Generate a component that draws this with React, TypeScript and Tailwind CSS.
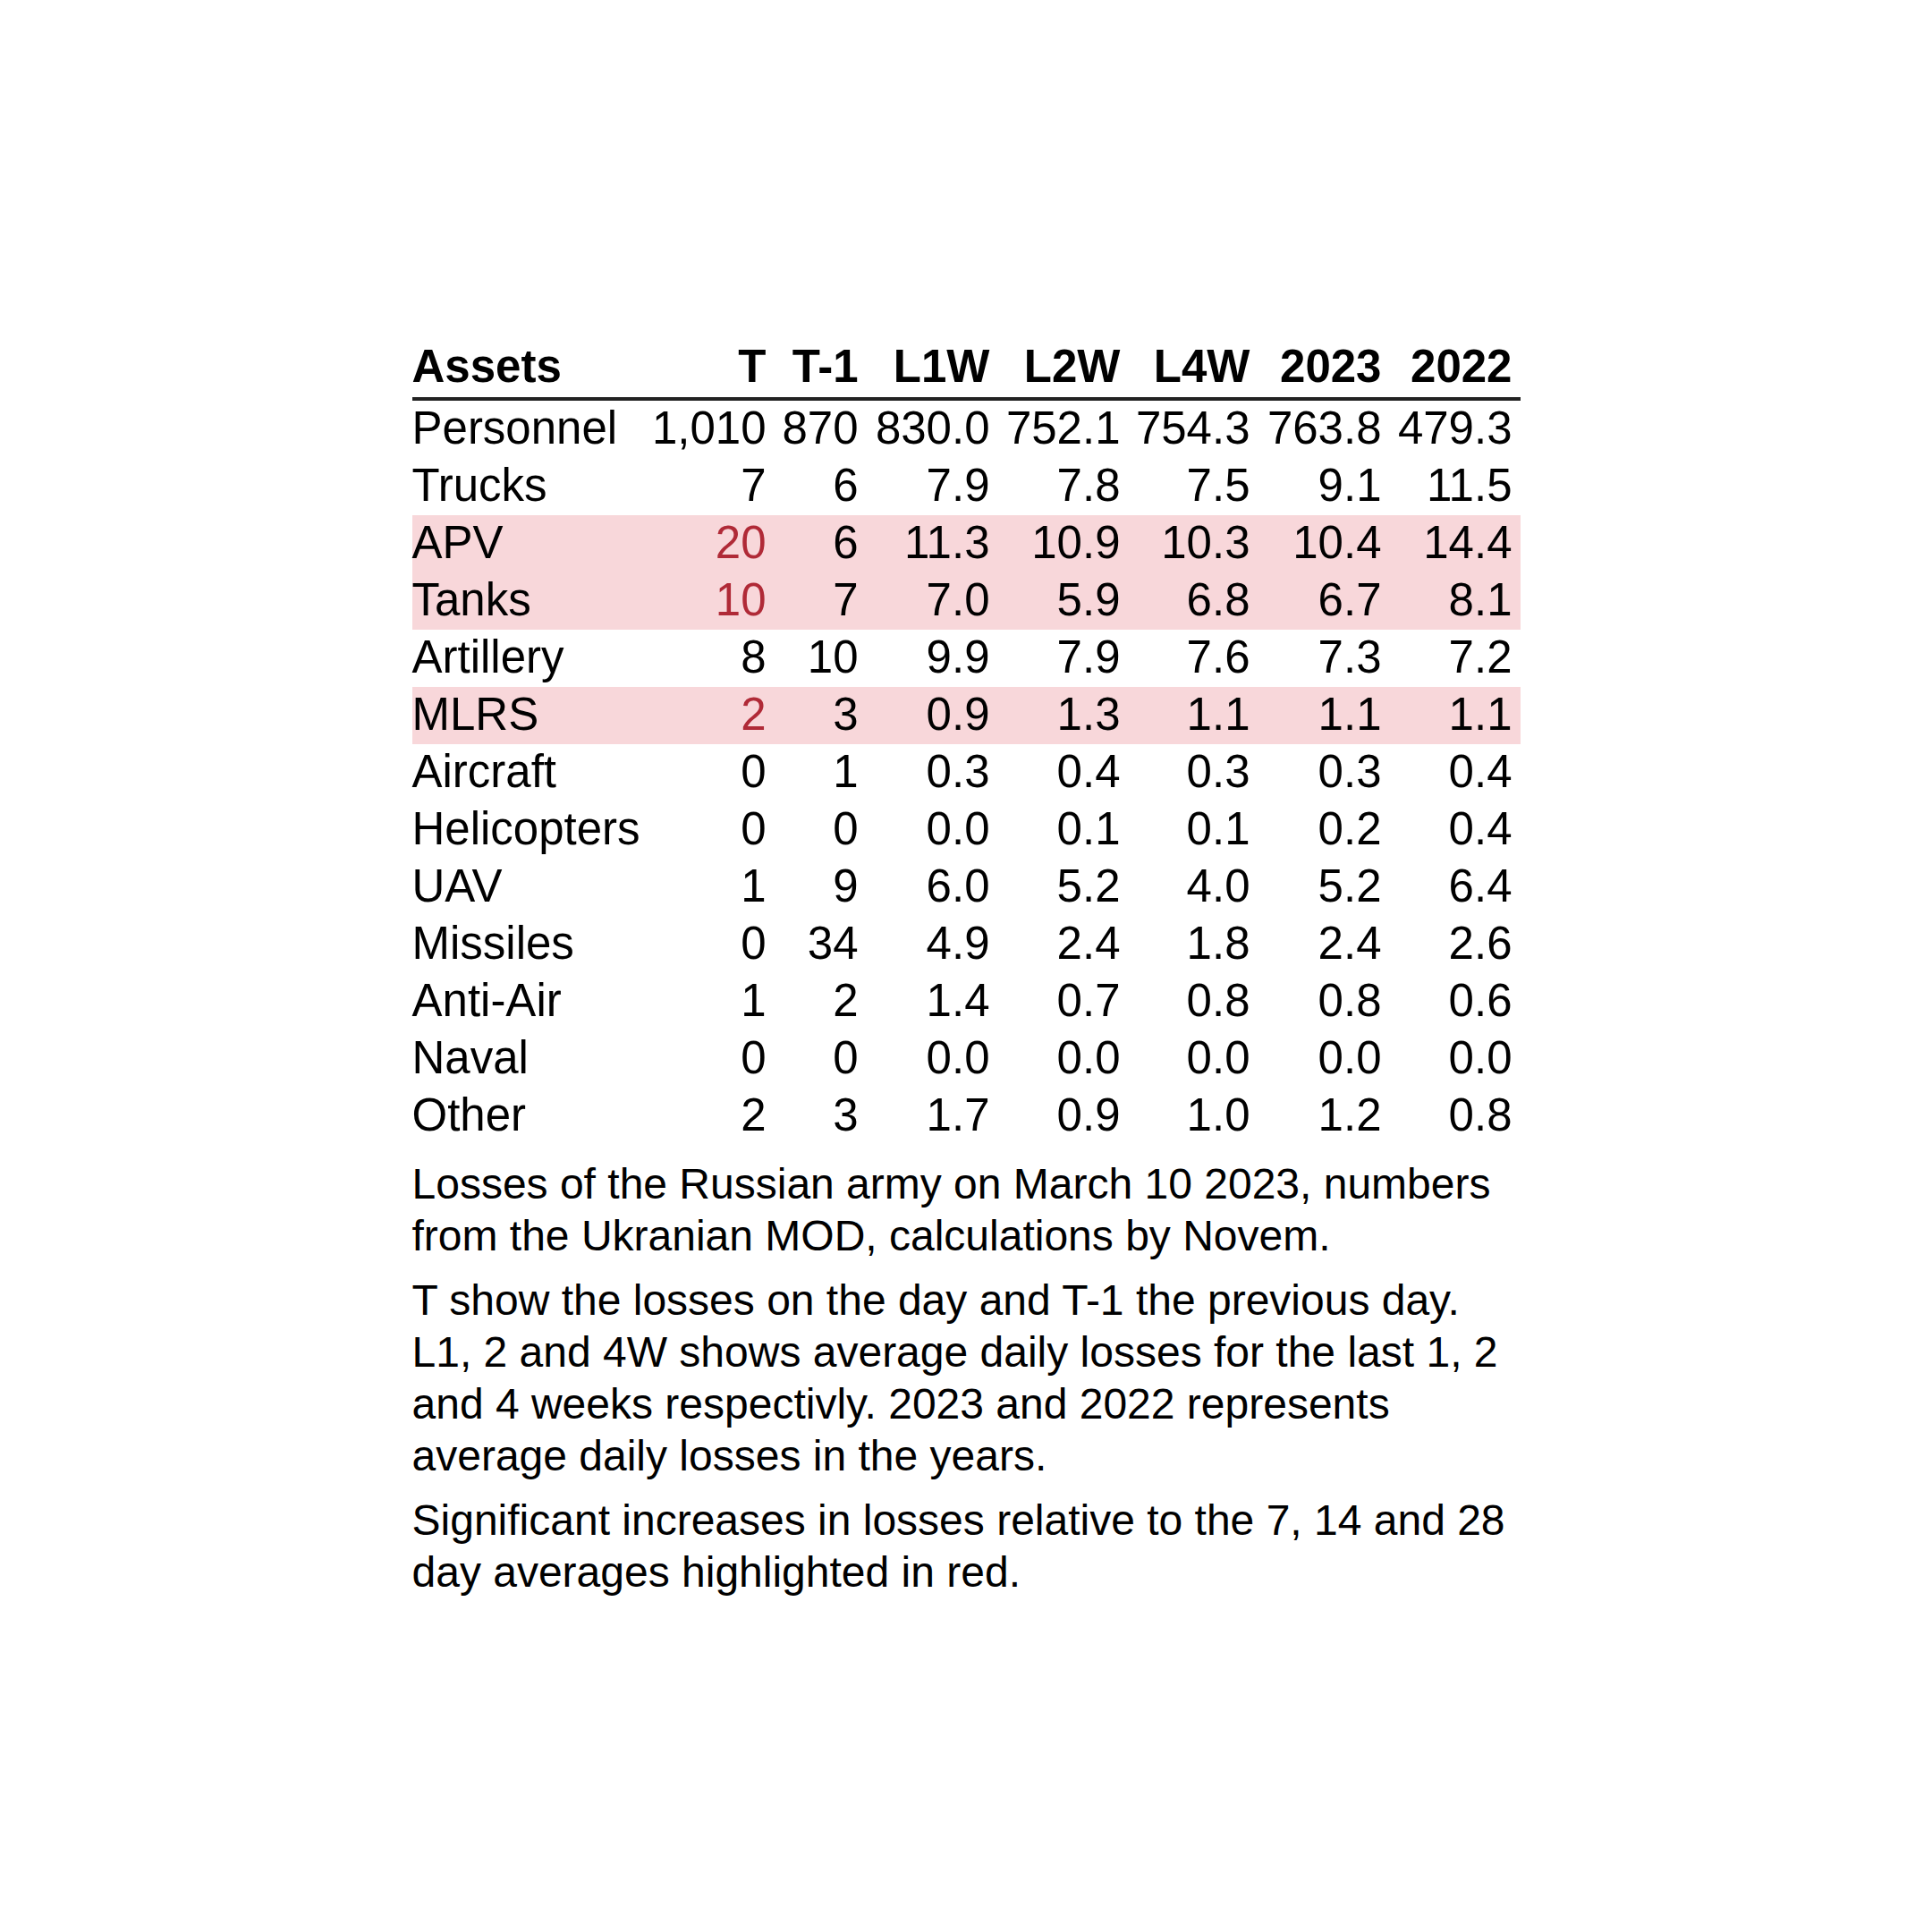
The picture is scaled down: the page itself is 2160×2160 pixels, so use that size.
import React from "react";

type Row = { name: string; vals: string[]; hl?: boolean };

const rows: Row[] = [
  { name: "Personnel", vals: ["1,010", "870", "830.0", "752.1", "754.3", "763.8", "479.3"] },
  { name: "Trucks", vals: ["7", "6", "7.9", "7.8", "7.5", "9.1", "11.5"] },
  { name: "APV", vals: ["20", "6", "11.3", "10.9", "10.3", "10.4", "14.4"], hl: true },
  { name: "Tanks", vals: ["10", "7", "7.0", "5.9", "6.8", "6.7", "8.1"], hl: true },
  { name: "Artillery", vals: ["8", "10", "9.9", "7.9", "7.6", "7.3", "7.2"] },
  { name: "MLRS", vals: ["2", "3", "0.9", "1.3", "1.1", "1.1", "1.1"], hl: true },
  { name: "Aircraft", vals: ["0", "1", "0.3", "0.4", "0.3", "0.3", "0.4"] },
  { name: "Helicopters", vals: ["0", "0", "0.0", "0.1", "0.1", "0.2", "0.4"] },
  { name: "UAV", vals: ["1", "9", "6.0", "5.2", "4.0", "5.2", "6.4"] },
  { name: "Missiles", vals: ["0", "34", "4.9", "2.4", "1.8", "2.4", "2.6"] },
  { name: "Anti-Air", vals: ["1", "2", "1.4", "0.7", "0.8", "0.8", "0.6"] },
  { name: "Naval", vals: ["0", "0", "0.0", "0.0", "0.0", "0.0", "0.0"] },
  { name: "Other", vals: ["2", "3", "1.7", "0.9", "1.0", "1.2", "0.8"] },
];

const headers = ["T", "T-1", "L1W", "L2W", "L4W", "2023", "2022"];

const gridCols = "grid grid-cols-[250px_146px_103px_147px_146px_145px_147px_146px] pr-[9px]";

export default function App() {
  return (
    <div
      className="w-[2160px] h-[2160px] bg-white text-black pt-[379px]"
      style={{ fontFamily: '"Liberation Sans", Arial, sans-serif' }}
    >
      <div className="mx-auto w-[1239px]">
        {/* header */}
        <div className={`${gridCols} text-[51px] leading-[62px] font-bold pb-[3px]`}>
          <div className="text-left whitespace-nowrap">Assets</div>
          {headers.map((h) => (
            <div key={h} className="text-right whitespace-nowrap">
              {h}
            </div>
          ))}
        </div>
        <div className="h-[4px] bg-[#222222]" />
        {/* body */}
        <div className="text-[51px]">
          {rows.map((r) => (
            <div
              key={r.name}
              className={`${gridCols} h-[64px] leading-[62px] pb-[2px] ${r.hl ? "bg-[#f8d7da]" : ""}`}
            >
              <div className="text-left whitespace-nowrap">{r.name}</div>
              {r.vals.map((v, i) => (
                <div
                  key={i}
                  className={`text-right whitespace-nowrap ${r.hl && i === 0 ? "text-[#b02a37]" : ""}`}
                >
                  {v}
                </div>
              ))}
            </div>
          ))}
        </div>
        {/* captions */}
        <div className="mt-[15px] flex flex-col gap-[14px] text-[48px] leading-[58px]">
          <p>
            Losses of the Russian army on March 10 2023, numbers from the Ukranian MOD, calculations by Novem.
          </p>
          <p>
            T show the losses on the day and T-1 the previous day. L1, 2 and 4W shows average daily losses for the
            last 1, 2 and 4 weeks respectivly. 2023 and 2022 represents average daily losses in the years.
          </p>
          <p>Significant increases in losses relative to the 7, 14 and 28 day averages highlighted in red.</p>
        </div>
      </div>
    </div>
  );
}
